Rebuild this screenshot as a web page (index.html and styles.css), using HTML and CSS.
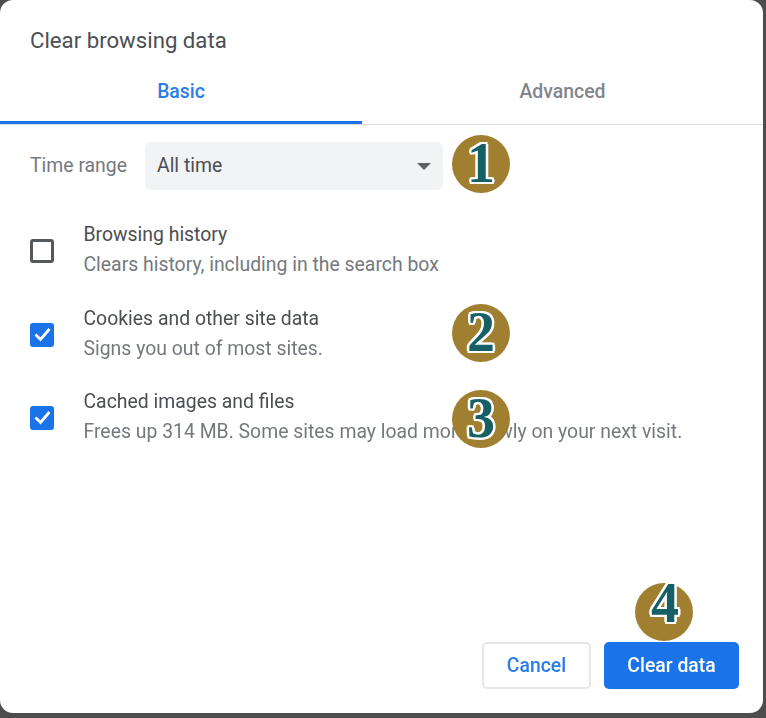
FILE: index.html
```html
<!DOCTYPE html>
<html lang="en">
<head>
<meta charset="utf-8">
<title>Clear browsing data</title>
<link rel="stylesheet" href="styles.css">
</head>
<body>
<div class="dialog">
  <h1 class="title">Clear browsing data</h1>
  <div class="tabs">
    <div class="tab active">Basic</div>
    <div class="tab">Advanced</div>
  </div>
  <div class="range">
    <span class="range-label">Time range</span>
    <div class="select">
      <span>All time</span>
      <span class="caret"></span>
    </div>
  </div>
  <div class="options">
    <div class="option">
      <span class="box"></span>
      <div class="texts">
        <div class="label">Browsing history</div>
        <div class="desc">Clears history, including in the search box</div>
      </div>
    </div>
    <div class="option">
      <span class="box checked"><svg viewBox="0 0 24 24" class="tick"><path d="M5.5 11.5l5 5 9-10.5"/></svg></span>
      <div class="texts">
        <div class="label">Cookies and other site data</div>
        <div class="desc">Signs you out of most sites.</div>
      </div>
    </div>
    <div class="option">
      <span class="box checked"><svg viewBox="0 0 24 24" class="tick"><path d="M5.5 11.5l5 5 9-10.5"/></svg></span>
      <div class="texts">
        <div class="label">Cached images and files</div>
        <div class="desc">Frees up 314 MB. Some sites may load more slowly on your next visit.</div>
      </div>
    </div>
  </div>
  <div class="actions">
    <button class="btn cancel">Cancel</button>
    <button class="btn primary">Clear data</button>
  </div>
  <div class="badge b1"><span>1</span></div>
  <div class="badge b2"><span>2</span></div>
  <div class="badge b3"><span>3</span></div>
  <div class="badge b4"><span>4</span></div>
</div>
</body>
</html>
```
FILE: styles.css
```css
* { box-sizing: border-box; }
html, body { margin: 0; height: 100%; }
body {
  width: 766px;
  height: 718px;
  overflow: hidden;
  background: #4d4d4d;
  font-family: Roboto, "Liberation Sans", sans-serif;
}
.dialog {
  position: relative;
  width: 763px;
  height: 713px;
  background: #fff;
  border-radius: 13px;
  display: flex;
  flex-direction: column;
  filter: blur(0.4px);
}
.title {
  margin: 0;
  padding: 27px 30px 0;
  height: 68px;
  font-size: 22.2px;
  line-height: 26px;
  font-weight: 400;
  color: #4b4e52;
}
.tabs {
  display: flex;
  height: 57px;
  border-bottom: 1px solid #dadce0;
}
.tab {
  width: 362px;
  height: 56px;
  padding-top: 12px;
  text-align: center;
  font-size: 19.4px;
  line-height: 23px;
  font-weight: 500;
  color: #80868b;
}
.tab + .tab { width: 401px; }
.tab.active {
  color: #2a7de9;
  border-bottom: 3px solid #1a73e8;
}
.range {
  display: flex;
  align-items: center;
  margin-top: 17px;
  padding-left: 30px;
}
.range-label {
  width: 115px;
  padding-bottom: 2px;
  font-size: 19.4px;
  color: #75797e;
}
.select {
  width: 298px;
  height: 48px;
  padding: 0 12px 2px;
  border-radius: 6px;
  background: #f1f3f4;
  display: flex;
  align-items: center;
  justify-content: space-between;
  font-size: 19.4px;
  color: #4b4e52;
}
.caret {
  width: 0;
  height: 0;
  margin-top: 2px;
  border-left: 7px solid transparent;
  border-right: 7px solid transparent;
  border-top: 7px solid #5f6368;
}
.options {
  margin-top: 31px;
  padding-left: 30px;
  display: flex;
  flex-direction: column;
  gap: 23.5px;
}
.option {
  display: flex;
  align-items: center;
  height: 60px;
}
.box {
  width: 24px;
  height: 24px;
  border: 3px solid #55595e;
  border-radius: 3px;
  margin-right: 29.5px;
  display: flex;
}
.box.checked {
  border: 0;
  background: #1a73e8;
}
.tick {
  width: 24px;
  height: 24px;
  fill: none;
  stroke: #fff;
  stroke-width: 2.8;
}
.texts {
  margin-top: -2px;
}
.label {
  font-size: 19.4px;
  line-height: 30px;
  color: #4b4e52;
}
.desc {
  font-size: 19.4px;
  line-height: 30px;
  color: #75797e;
}
.actions {
  margin-top: auto;
  padding: 0 24px 24px 0;
  display: flex;
  justify-content: flex-end;
  gap: 13px;
}
.btn {
  height: 47px;
  border-radius: 5px;
  font-family: inherit;
  font-size: 19.4px;
  font-weight: 500;
  padding: 0;
}
.cancel {
  width: 109px;
  background: #fff;
  border: 2px solid #e4e6ea;
  color: #2a7de9;
}
.primary {
  width: 135px;
  background: #1a73e8;
  border: 0;
  color: #fff;
}
.badge {
  position: absolute;
  width: 58px;
  height: 58px;
  border-radius: 50%;
  background: #a08030;
  display: flex;
  align-items: center;
  justify-content: center;
  font-family: "Liberation Serif", "DejaVu Serif", serif;
  font-weight: 700;
  font-size: 56px;
  line-height: 58px;
  color: #155f65;
  text-shadow:
    2.4px 0 0 #fff, -2.4px 0 0 #fff, 0 2.4px 0 #fff, 0 -2.4px 0 #fff,
    1.7px 1.7px 0 #fff, -1.7px 1.7px 0 #fff, 1.7px -1.7px 0 #fff, -1.7px -1.7px 0 #fff;
}
.badge span { position: relative; top: -1px; }
.b1 { left: 452px; top: 135px; }
.b2 { left: 452px; top: 304px; }
.b3 { left: 452px; top: 390px; }
.b4 { left: 635px; top: 583px; }
.b4 span { top: -9px; left: 1px; }
```
